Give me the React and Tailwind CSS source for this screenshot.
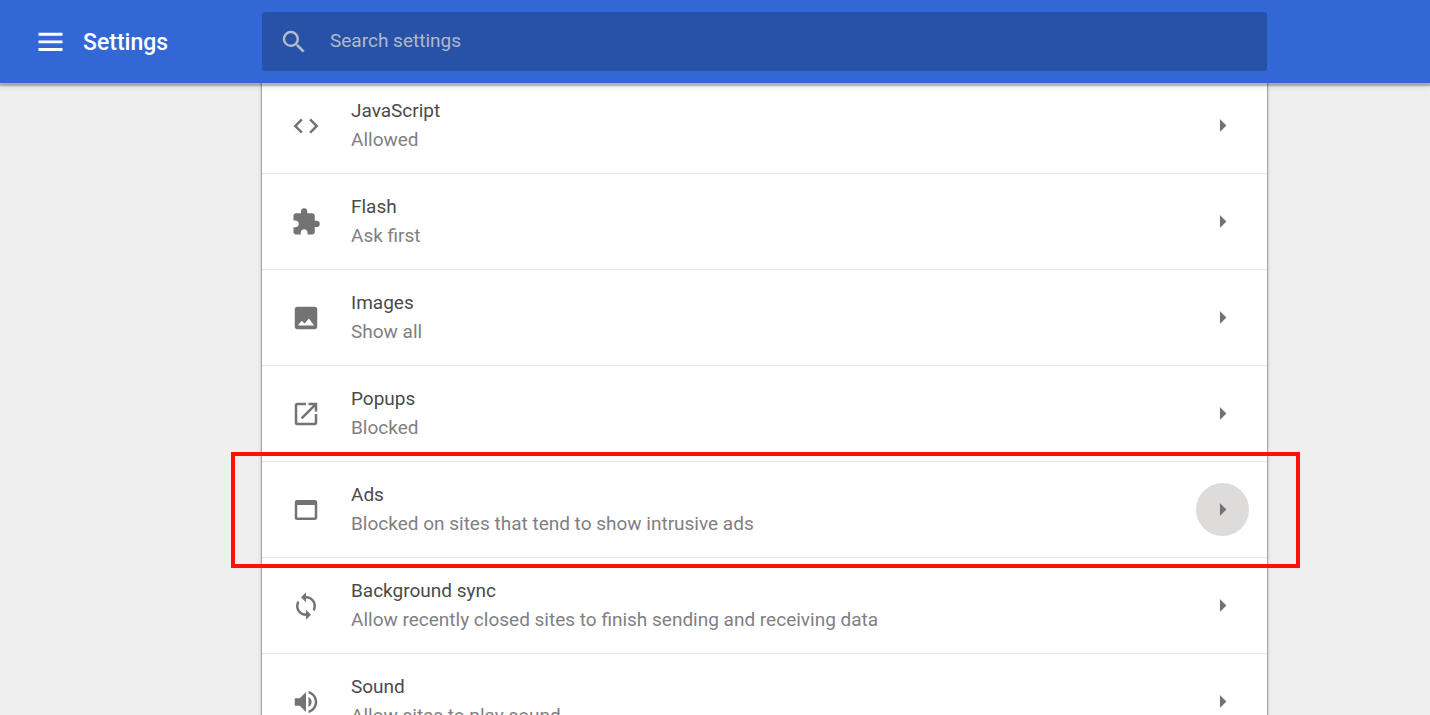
import React, { useState } from 'react';
import {
  MdArrowRight,
  MdCode,
  MdExtension,
  MdOpenInNew,
  MdSearch,
  MdSync,
  MdVolumeUp,
  MdWebAsset,
} from 'react-icons/md';

const MenuIcon = ({ className }) => (
  <svg viewBox="0 0 26 20" fill="currentColor" className={className} aria-hidden="true">
    <path d="M1.5 .8h24v2.9h-24zM1.5 8.4h24v2.9h-24zM1.5 16h24v2.9h-24z" />
  </svg>
);

const PhotoIcon = ({ className }) => (
  <svg viewBox="0 0 24 24" fill="currentColor" className={className} aria-hidden="true">
    <path d="M21 19V5c0-1.1-.9-2-2-2H5c-1.1 0-2 .9-2 2v14c0 1.1.9 2 2 2h14c1.1 0 2-.9 2-2zM8.5 14.2l2.4 2.2 3.4-4 4.2 5.6h-13z" />
  </svg>
);

const CONTENT_SETTINGS = [
  { id: 'javascript', title: 'JavaScript', status: 'Allowed', icon: MdCode },
  { id: 'flash', title: 'Flash', status: 'Ask first', icon: MdExtension },
  { id: 'images', title: 'Images', status: 'Show all', icon: PhotoIcon },
  { id: 'popups', title: 'Popups', status: 'Blocked', icon: MdOpenInNew },
  {
    id: 'ads',
    title: 'Ads',
    status: 'Blocked on sites that tend to show intrusive ads',
    icon: MdWebAsset,
    highlighted: true,
  },
  {
    id: 'background-sync',
    title: 'Background sync',
    status: 'Allow recently closed sites to finish sending and receiving data',
    icon: MdSync,
  },
  { id: 'sound', title: 'Sound', status: 'Allow sites to play sound', icon: MdVolumeUp },
];

const SettingRow = ({ title, status, icon: Icon, highlighted }) => (
  <li className="relative flex h-24 items-center border-b border-[#e9e9e9] pr-[18px] pl-[29px]">
    <Icon className="h-[30px] w-[30px] shrink-0 text-[#737373]" />
    <div className="ml-[30px] min-w-0 flex-1 pb-0.5 text-[19px] leading-[29px]">
      <h2 className="text-[#4a4a4c]">{title}</h2>
      <p className="text-[#808084]">{status}</p>
    </div>
    <button
      type="button"
      aria-label={title}
      className={`flex h-[53px] w-[53px] items-center justify-center rounded-full text-[#737373] ${
        highlighted ? 'bg-[#dedbdb]' : ''
      }`}
    >
      <MdArrowRight className="h-[31px] w-[31px]" />
    </button>

    {/* Red callout frame around the row */}
    {highlighted && (
      <div className="pointer-events-none absolute -top-[10px] -right-[33px] -bottom-[11px] -left-[31px] border-4 border-[#ff1205]" />
    )}
  </li>
);

const App = () => {
  const [query, setQuery] = useState('');

  return (
    <div className="flex h-screen flex-col overflow-hidden bg-[#efefef] font-[Roboto,sans-serif]">
      {/* Toolbar */}
      <header className="relative z-10 grid shrink-0 grid-cols-[262px_1fr_163px] bg-[#3367d6] py-3 shadow-[0_3px_1px_rgba(0,0,0,0.2),0_3px_6px_rgba(0,0,0,0.16)]">
        <div className="flex items-center pl-[37px] text-white">
          <button type="button" aria-label="Main menu">
            <MenuIcon className="h-5 w-[26px]" />
          </button>
          <h1 className="ml-5 pt-0.5 text-[23px] leading-8 font-medium">Settings</h1>
        </div>
        <label className="flex h-[59px] items-center rounded-[3px] bg-[#2851a8] pl-[17px] text-[#b4bcd0]">
          <MdSearch className="h-[30px] w-[30px] shrink-0" />
          <input
            type="text"
            aria-label="Search settings"
            placeholder="Search settings"
            value={query}
            onChange={(e) => setQuery(e.target.value)}
            className="ml-[21px] min-w-0 flex-1 bg-transparent text-[19px] outline-none placeholder:text-[#b0b9cc]"
          />
        </label>
      </header>

      {/* Content settings list, scrolled slightly under the toolbar */}
      <main className="-mt-[5px] grid grid-cols-[262px_1fr_163px]">
        <ul className="col-start-2 bg-white shadow-[0_0_1px_1px_rgba(0,0,0,0.25),0_0_5px_rgba(0,0,0,0.16)]">
          {CONTENT_SETTINGS.map((setting) => (
            <SettingRow key={setting.id} {...setting} />
          ))}
        </ul>
      </main>
    </div>
  );
};

export default App;
